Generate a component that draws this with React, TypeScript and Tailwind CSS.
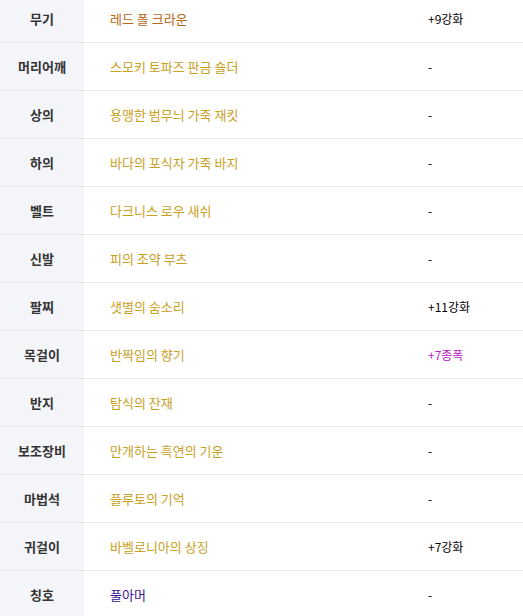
import React from "react";

type Row = { label: string; name: string; nameColor: string; value: string; valueColor?: string };

const rows: Row[] = [
  { label: "무기", name: "레드 폴 크라운", nameColor: "text-[#b8661a]", value: "+9강화" },
  { label: "머리어깨", name: "스모키 토파즈 판금 숄더", nameColor: "text-[#c9a01e]", value: "-" },
  { label: "상의", name: "용맹한 범무늬 가죽 재킷", nameColor: "text-[#c9a01e]", value: "-" },
  { label: "하의", name: "바다의 포식자 가죽 바지", nameColor: "text-[#c9a01e]", value: "-" },
  { label: "벨트", name: "다크니스 로우 새쉬", nameColor: "text-[#c9a01e]", value: "-" },
  { label: "신발", name: "피의 조약 부츠", nameColor: "text-[#c9a01e]", value: "-" },
  { label: "팔찌", name: "샛별의 숨소리", nameColor: "text-[#c9a01e]", value: "+11강화" },
  { label: "목걸이", name: "반짝임의 향기", nameColor: "text-[#c9a01e]", value: "+7종폭", valueColor: "text-[#c020c8]" },
  { label: "반지", name: "탐식의 잔재", nameColor: "text-[#c9a01e]", value: "-" },
  { label: "보조장비", name: "만개하는 흑연의 기운", nameColor: "text-[#c9a01e]", value: "-" },
  { label: "마법석", name: "플루토의 기억", nameColor: "text-[#c9a01e]", value: "-" },
  { label: "귀걸이", name: "바벨로니아의 상징", nameColor: "text-[#c9a01e]", value: "+7강화" },
  { label: "칭호", name: "풀아머", nameColor: "text-[#3a1199]", value: "-" },
];

export default function App() {
  return (
    <div className="w-[523px] h-[616px] overflow-hidden bg-white" style={{ fontFamily: '"Noto Sans CJK KR", "Noto Sans", sans-serif' }}>
      <div className="-mt-[5px]">
        {rows.map((r, i) => (
          <div key={i} className={`flex h-[48px] ${i < rows.length - 1 ? "border-b border-[#e6e6e6]" : ""}`}>
            <div className="w-[84px] shrink-0 bg-[#f4f5f9] flex items-center justify-center text-[13px] font-bold text-[#333333]">
              {r.label}
            </div>
            <div className={`w-[344px] shrink-0 flex items-center pl-[26px] text-[13px] ${r.nameColor}`}>
              {r.name}
            </div>
            <div className={`flex-1 flex items-center text-[12px] ${r.valueColor ?? "text-black"}`}>
              {r.value}
            </div>
          </div>
        ))}
      </div>
    </div>
  );
}
